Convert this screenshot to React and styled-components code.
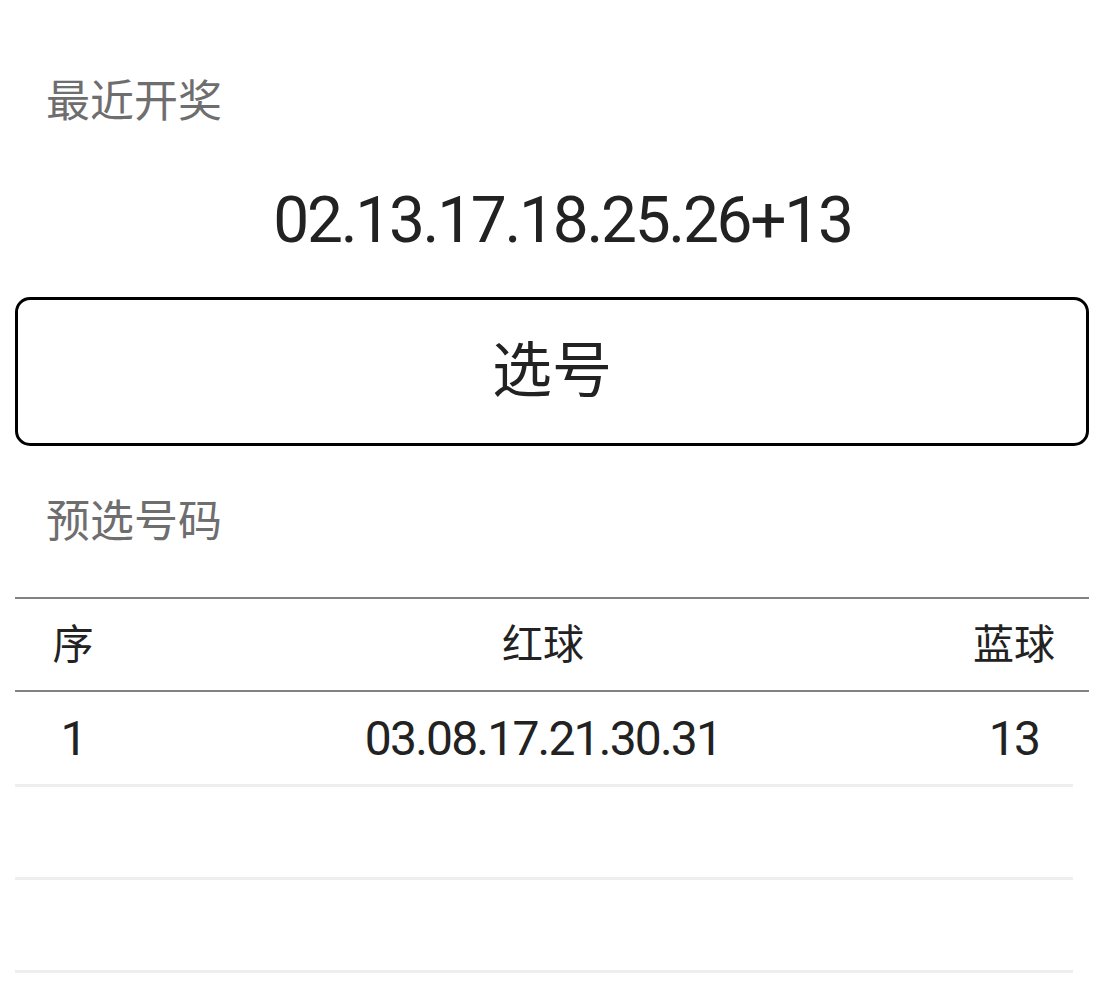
import styled, { createGlobalStyle } from "styled-components";

const GlobalStyle = createGlobalStyle`
  html, body {
    margin: 0;
    padding: 0;
    background: #fff;
  }
  body {
    font-family: Roboto, "Noto Sans CJK SC", sans-serif;
    color: #222;
  }
`;

const Page = styled.div`
  padding: 76px 15px 0;
  display: flex;
  flex-direction: column;
`;

const SectionTitle = styled.div`
  padding-left: 31px;
  font-family: "Noto Sans CJK SC", sans-serif;
  font-size: 44px;
  line-height: 44px;
  color: #6e6e6e;
  margin-top: ${(props) => props.$gap || 0}px;
`;

const LatestNumber = styled.div`
  margin-top: 69px;
  padding-left: 21px;
  text-align: center;
  font-family: Roboto, sans-serif;
  font-size: 64px;
  line-height: 64px;
  letter-spacing: -2.3px;
  color: #222;
`;

const PickButton = styled.button`
  margin-top: 44px;
  height: 149px;
  width: 100%;
  box-sizing: border-box;
  border: 3px solid #000;
  border-radius: 15px;
  background: #fff;
  display: flex;
  align-items: center;
  justify-content: center;
  font-family: "Noto Sans CJK SC", sans-serif;
  font-size: 60px;
  color: #222;
  cursor: pointer;
  padding: 0 0 13px;
`;

const Table = styled.div`
  margin-top: 57px;
  display: flex;
  flex-direction: column;
`;

const HeaderRow = styled.div`
  display: grid;
  grid-template-columns: 116px 1fr 118px;
  padding: 0 16px 7px 0;
  box-sizing: border-box;
  height: 95px;
  align-items: center;
  border-top: 2px solid #828282;
  border-bottom: 2px solid #828282;
  font-family: "Noto Sans CJK SC", sans-serif;
  font-size: 41px;
  color: #222;
`;

const Body = styled.div`
  width: 1058px;
  display: flex;
  flex-direction: column;
`;

const Row = styled.div`
  display: grid;
  grid-template-columns: 116px 1fr 118px;
  height: ${(props) => (props.$first ? 95 : 93)}px;
  box-sizing: border-box;
  padding-top: 1px;
  align-items: center;
  border-bottom: 3px solid #eeeeee;
  font-family: Roboto, sans-serif;
  font-size: 48px;
  letter-spacing: -1.8px;
  color: #222;
`;

const Cell = styled.div`
  text-align: center;
  white-space: nowrap;
`;

const picks = [
  { id: 1, red: "03.08.17.21.30.31", blue: "13" },
  { id: "", red: "", blue: "" },
  { id: "", red: "", blue: "" },
];

export default function App() {
  return (
    <>
      <GlobalStyle />
      <Page>
        <SectionTitle>最近开奖</SectionTitle>
        <LatestNumber>02.13.17.18.25.26+13</LatestNumber>
        <PickButton>选号</PickButton>
        <SectionTitle $gap={50}>预选号码</SectionTitle>
        <Table>
          <HeaderRow>
            <Cell>序</Cell>
            <Cell>红球</Cell>
            <Cell>蓝球</Cell>
          </HeaderRow>
          <Body>
            {picks.map((p, i) => (
              <Row key={i} $first={i === 0}>
                <Cell>{p.id}</Cell>
                <Cell>{p.red}</Cell>
                <Cell>{p.blue}</Cell>
              </Row>
            ))}
          </Body>
        </Table>
      </Page>
    </>
  );
}
